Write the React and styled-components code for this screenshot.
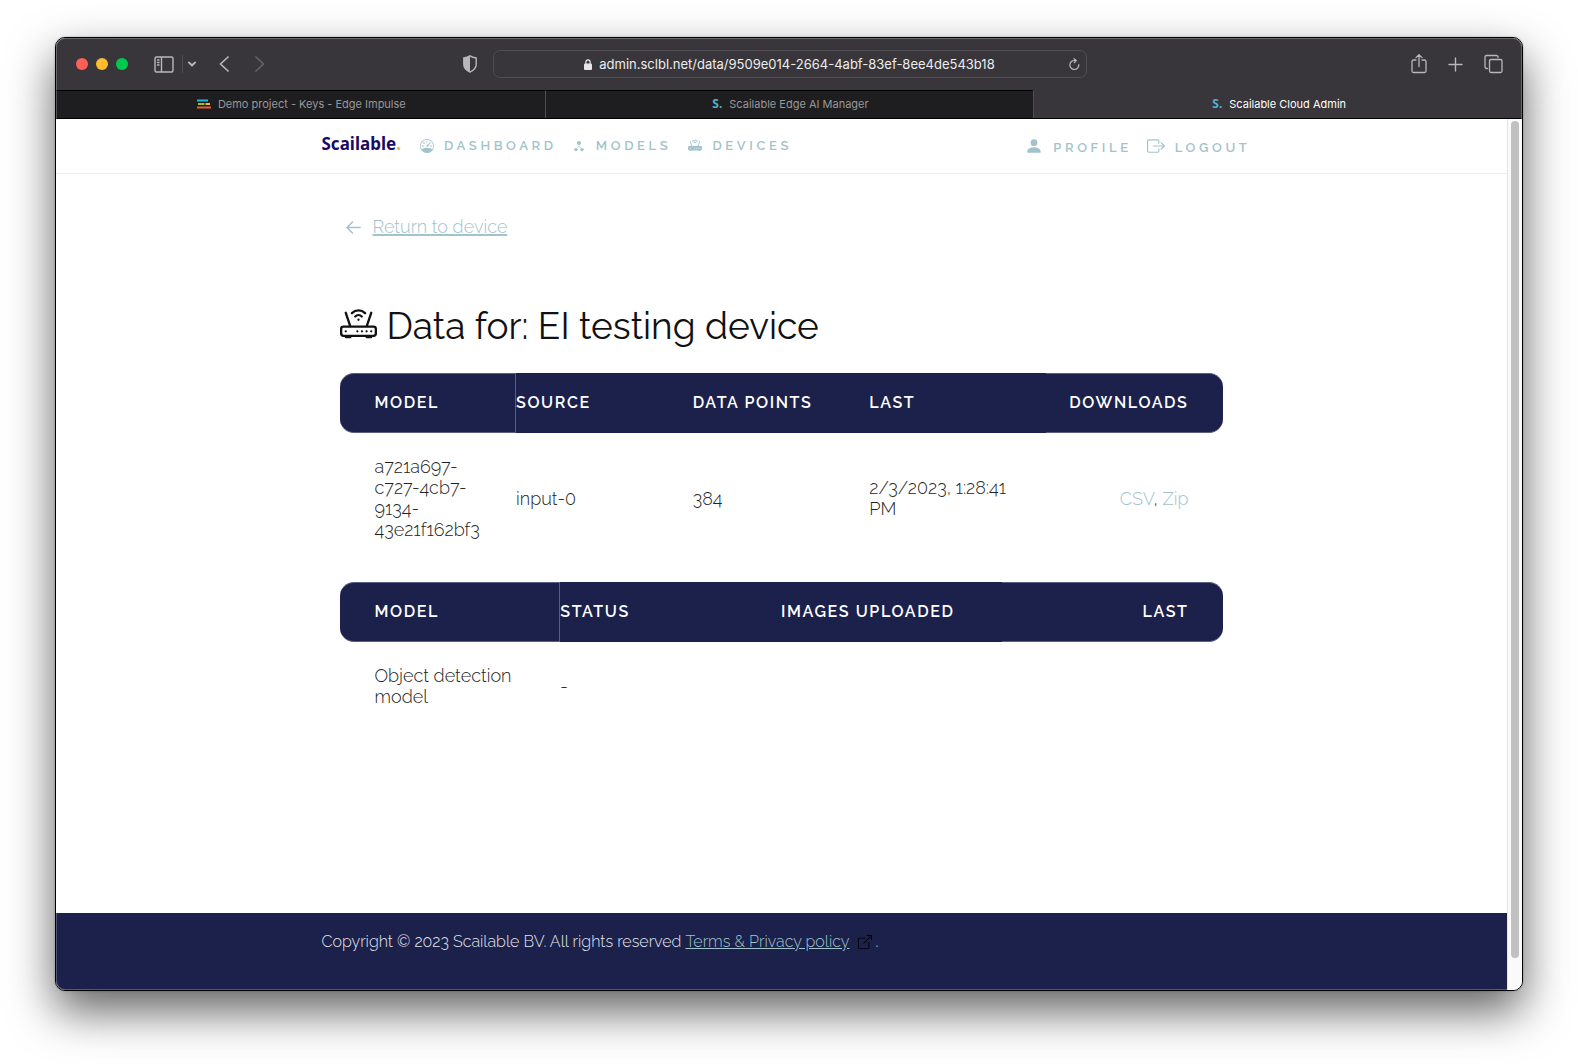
import React from "react";
import styled, { createGlobalStyle, css } from "styled-components";
import {
  BsSpeedometer,
  BsRouter,
  BsRouterFill,
  BsPersonFill,
  BsBoxArrowRight,
  BsBoxArrowUpRight,
} from "react-icons/bs";

const navy = "#1b214b";
const teal = "#a1c3cc";
const chrome = "#38363a";
const uiFont = `Inter, "Liberation Sans", sans-serif`;
const bodyFont = `Raleway, Lato, "Open Sans", sans-serif`;

const GlobalStyle = createGlobalStyle`
  *, *::before, *::after { box-sizing: border-box; }
  body { margin: 0; background: #fff; font-family: ${bodyFont}; color: #222; }
  button { font: inherit; color: inherit; background: none; border: 0; padding: 0; }
  svg { display: block; flex: none; }
`;

const Desktop = styled.div`
  display: flex;
  min-height: 100vh;
  padding: 37px 55px 73px;
  overflow: hidden;
`;

const Window = styled.div`
  position: relative;
  flex: 1;
  min-width: 0;
  display: flex;
  flex-direction: column;
  border: 1px solid #000;
  border-radius: 10px;
  overflow: hidden;
  background: #fff;
  box-shadow: 0 0 2px rgba(0, 0, 0, 0.3), 0 20px 46px rgba(0, 0, 0, 0.62);

  &::after {
    content: "";
    position: absolute;
    inset: 0;
    border-radius: 9px;
    box-shadow: inset 0 0 0 1px rgba(255, 255, 255, 0.25);
    pointer-events: none;
  }
`;

const Toolbar = styled.div`
  display: grid;
  grid-template-columns: 1fr minmax(0, 594px) 1fr;
  align-items: center;
  column-gap: 16px;
  height: 52px;
  padding: 0 19px 0 20px;
  background: ${chrome};
  color: #b9b7bb;
`;

const ToolGroup = styled.div`
  display: flex;
  align-items: center;
  gap: ${(p) => p.$gap || 0}px;
  ${(p) => p.$end && css`justify-content: flex-end;`}
`;

const Light = styled.button`
  width: 12px;
  height: 12px;
  border-radius: 50%;
  background: ${(p) => p.$color};
`;

const ToolButton = styled.button`
  display: flex;
  opacity: ${(p) => (p.disabled ? 0.35 : 1)};
  margin-left: ${(p) => p.$before || 0}px;
`;

const ToolDivider = styled.span`
  width: 1px;
  height: 18px;
  margin-left: 8px;
  background: #4d4b50;
`;

const ShieldButton = styled(ToolButton)`
  margin-left: auto;
`;

const AddressBar = styled.form`
  display: grid;
  grid-template-columns: 20px 1fr 20px;
  align-items: center;
  height: 28px;
  padding: 0 4px;
  border: 1px solid #504e53;
  border-radius: 7px;
`;

const AddressLabel = styled.label`
  grid-column: 2;
  display: flex;
  justify-content: center;
  align-items: center;
  gap: 7px;
  min-width: 0;
  color: #e6e5e7;
`;

const AddressInput = styled.input`
  field-sizing: content;
  min-width: 0;
  padding: 0;
  border: 0;
  outline: 0;
  background: transparent;
  color: #ececee;
  font: 400 13px/20px ${uiFont};
`;

const TabBar = styled.div`
  display: grid;
  grid-template-columns: repeat(3, 1fr);
  height: 29px;
  border-bottom: 1px solid #000;
  background: ${chrome};
`;

const Tab = styled.button`
  display: flex;
  justify-content: center;
  align-items: center;
  gap: 7px;
  min-width: 0;
  padding: 0 0 1px 2px;
  font: 400 11px/16px ${uiFont};
  color: ${(p) => (p.$active ? "#fff" : "#98979a")};
  background: ${(p) => (p.$active ? chrome : "#1e1e20")};
  border-top: 1px solid ${(p) => (p.$active ? chrome : "#000")};
  & + & { border-left: 1px solid #504e53; }
`;

const Favicon = styled.span`
  font: 700 12px/16px "Noto Sans", sans-serif;
  color: #4fb3cf;
`;

const Viewport = styled.div`
  flex: 1;
  display: flex;
`;

const Page = styled.div`
  flex: 1;
  min-width: 0;
  display: flex;
  flex-direction: column;
`;

const ScrollTrack = styled.div`
  width: 15px;
  padding: 2px 2px 2px 3px;
  border-left: 1px solid #e4e4e4;
  background: #fafafa;
`;

const ScrollThumb = styled.div`
  width: 8px;
  height: 96.5%;
  border-radius: 4px;
  background: #c1c1c1;
`;

const Container = styled.div`
  width: 100%;
  max-width: 960px;
  margin: 0 auto;
  padding: 0 11px 0 20px;
`;

const NavBar = styled.header`
  border-bottom: 1px solid #ececec;
`;

const NavRow = styled(Container)`
  display: flex;
  align-items: center;
  height: 54px;
`;

const Logo = styled.a`
  margin: 0 19px 4px 0;
  font: 700 17px/24px "Noto Sans", sans-serif;
  color: #1b0a63;
  text-decoration: none;
  span { color: #fbb03b; }
`;

const NavGroup = styled.nav`
  display: flex;
  gap: 17px;
  ${(p) => p.$end && css`
    gap: 15px;
    margin-left: auto;
    padding-top: 4px;
    svg { margin-bottom: 4px; }
  `}
`;

const NavLink = styled.a`
  display: flex;
  align-items: center;
  gap: 10px;
  font-size: 13px;
  line-height: 20px;
  font-weight: 600;
  letter-spacing: 0.28em;
  text-transform: uppercase;
  text-decoration: none;
  color: ${teal};
`;

const Main = styled.main`
  width: 100%;
  max-width: 922px;
  margin: 0 auto;
  padding: 42px 20px 40px 19px;
  flex: 1;
`;

const BackLink = styled.a`
  display: flex;
  align-items: center;
  gap: 12px;
  padding-left: 6px;
  color: ${teal};
  font-size: 18px;
  line-height: 22px;
  font-weight: 300;
  text-decoration: none;
  span {
    text-decoration: underline;
    text-decoration-thickness: 2px;
    text-underline-offset: 1px;
  }
`;

const Title = styled.h1`
  display: flex;
  align-items: center;
  gap: 10px;
  margin: 66px 0 25px;
  font-size: 37px;
  line-height: 44px;
  font-weight: 400;
  color: #111;
  svg { margin-bottom: 2px; }
`;

const DataTable = styled.table`
  width: 100%;
  margin-bottom: 17px;
  table-layout: fixed;
  border-collapse: separate;
  border-spacing: 0;
  text-align: left;

  th {
    height: 60px;
    padding: 0;
    background: ${navy};
    color: #fff;
    font-size: 16px;
    line-height: 20px;
    font-weight: 600;
    letter-spacing: 0.1em;
    text-transform: uppercase;
    white-space: nowrap;
  }
  th:first-child, th:last-child {
    border: 0 solid #5b5e80;
    border-width: 1px 0;
  }
  th:first-child { border-right-width: 1px; border-radius: 14px 0 0 14px; }
  th:last-child { border-radius: 0 14px 14px 0; }
  td {
    padding: 23px 16px 25px 0;
    vertical-align: middle;
    font-size: 18px;
    line-height: 21px;
    font-weight: 300;
    font-variant-numeric: oldstyle-nums;
  }
  th:first-child, td:first-child { padding-left: 35px; padding-right: 30px; }
  th:last-child, td:last-child { padding-right: 34px; text-align: right; }
`;

const DownloadLink = styled.a`
  color: ${teal};
  text-decoration: none;
`;

const Footer = styled.footer`
  background: ${navy};
  color: #e4e5ee;
  font-size: 16px;
  line-height: 20px;
  font-weight: 300;
  font-variant-numeric: oldstyle-nums;
`;

const FooterRow = styled(Container)`
  display: flex;
  align-items: center;
  height: 77px;
  padding-bottom: 19px;
`;

const FooterLink = styled.a`
  margin: 0 8px 0 4px;
  color: ${teal};
  text-decoration: underline;
`;

const FooterIcon = styled.span`
  margin-right: 4px;
  color: #000;
`;

const Line = ({ w, h, d, sw = 1.4 }) => (
  <svg width={w} height={h} viewBox={`0 0 ${w} ${h}`} fill="none" stroke="currentColor" strokeWidth={sw} strokeLinecap="round" strokeLinejoin="round" aria-hidden="true">
    <path d={d} />
  </svg>
);

const ModelsIcon = () => (
  <svg width="12" height="12" viewBox="0 0 12 12" fill="currentColor" aria-hidden="true">
    <circle cx="5" cy="3" r="2" />
    <circle cx="2" cy="9.6" r="1.7" />
    <circle cx="8" cy="9.6" r="1.7" />
    <path d="M5 4v2.600M2 9L5 6.400L8 9" fill="none" stroke="currentColor" strokeWidth="0.600" />
  </svg>
);

const ShieldIcon = () => (
  <svg width="14" height="18" viewBox="0 0 14 18" aria-hidden="true">
    <path d="M7 .9C9 2.3 11 2.8 13.2 3v6.3c0 3.8-2.6 6.2-6.2 7.8C3.4 15.500 .8 13.100 .8 9.300V3C3 2.800 5 2.300 7 .9z" fill="none" stroke="currentColor" strokeWidth="1.400" />
    <path d="M7 .9C5 2.300 3 2.800 .8 3v6.300c0 3.800 2.600 6.200 6.200 7.800z" fill="currentColor" />
  </svg>
);

const LockIcon = () => (
  <svg width="8" height="11" viewBox="0 0 8 11" aria-hidden="true">
    <rect x="0" y="4.500" width="8" height="6.500" rx="1" fill="currentColor" />
    <path d="M1.900 5V3a2.100 2.100 0 0 1 4.200 0v2" fill="none" stroke="currentColor" strokeWidth="1.200" />
  </svg>
);

const EdgeIcon = () => (
  <svg width="14" height="10" viewBox="0 0 14 10" strokeWidth="2" aria-hidden="true">
    <path d="M0 1.500h11" stroke="#29b5d8" />
    <path d="M1 5h6.500" stroke="#8fc31f" />
    <path d="M8.500 5H13" stroke="#f5b82e" />
    <path d="M0 8.500h14" stroke="#ef5a33" />
  </svg>
);

const Browser = () => (
  <>
    <Toolbar>
      <ToolGroup>
        <ToolGroup $gap={8}>
          <Light $color="#ff5f57" aria-label="Close" />
          <Light $color="#febc2e" aria-label="Minimize" />
          <Light $color="#00ca4e" aria-label="Zoom" />
        </ToolGroup>
        <ToolButton $before={26} aria-label="Sidebar">
          <Line w={20} h={17} d="M2.500 1h15a1.500 1.500 0 0 1 1.500 1.500v12a1.500 1.500 0 0 1-1.500 1.500h-15A1.500 1.500 0 0 1 1 14.500v-12A1.500 1.500 0 0 1 2.500 1zM7.500 1v15M3.500 4h1.500M3.500 6.500h1.500M3.500 9h1.500" />
        </ToolButton>
        <ToolDivider />
        <ToolButton $before={5} aria-label="Tab groups">
          <Line w={8} h={6} sw={1.8} d="M1 1.500l3 3l3-3" />
        </ToolButton>
        <ToolButton $before={23} aria-label="Back">
          <Line w={10} h={16} sw={1.7} d="M9 1L1.500 8L9 15" />
        </ToolButton>
        <ToolButton $before={26} disabled aria-label="Forward">
          <Line w={10} h={16} sw={1.7} d="M1 1L8.500 8L1 15" />
        </ToolButton>
        <ShieldButton aria-label="Privacy report">
          <ShieldIcon />
        </ShieldButton>
      </ToolGroup>
      <AddressBar onSubmit={(e) => e.preventDefault()}>
        <AddressLabel>
          <LockIcon />
          <AddressInput aria-label="Address" defaultValue="admin.sclbl.net/data/9509e014-2664-4abf-83ef-8ee4de543b18" />
        </AddressLabel>
        <ToolButton $before={7} type="button" aria-label="Reload">
          <Line w={11} h={12} sw={1.2} d="M9.800 6.500A4.500 4.500 0 1 1 5.500 2.500h1.500M5 .7l2.300 1.800L5.300 4.700" />
        </ToolButton>
      </AddressBar>
      <ToolGroup $end $gap={21}>
        <ToolButton aria-label="Share">
          <Line w={16} h={21} sw={1.300} d="M5 6H2.500A1.500 1.500 0 0 0 1 7.500v9.500a1.500 1.500 0 0 0 1.500 1.500h11a1.500 1.500 0 0 0 1.500-1.500V7.500A1.500 1.500 0 0 0 13.500 6H11M8 12.500V.8M5 3.600l3-3l3 3" />
        </ToolButton>
        <ToolButton aria-label="New tab">
          <Line w={15} h={15} sw={1.400} d="M7.500 1v13M1 7.500h13" />
        </ToolButton>
        <ToolButton aria-label="Tab overview">
          <Line w={19} h={20} sw={1.300} d="M7 5.500h9.500a1.500 1.500 0 0 1 1.500 1.500v10a1.500 1.500 0 0 1-1.500 1.500H7a1.500 1.500 0 0 1-1.500-1.500V7A1.500 1.500 0 0 1 7 5.500zM3.500 14.500H2.500A1.500 1.500 0 0 1 1 13V3a1.500 1.500 0 0 1 1.500-1.500h10A1.500 1.500 0 0 1 14 3v.5" />
        </ToolButton>
      </ToolGroup>
    </Toolbar>
    <TabBar>
      <Tab><EdgeIcon />Demo project - Keys - Edge Impulse</Tab>
      <Tab><Favicon>S.</Favicon>Scailable Edge AI Manager</Tab>
      <Tab $active><Favicon>S.</Favicon>Scailable Cloud Admin</Tab>
    </TabBar>
  </>
);

export default function App() {
  return (
    <>
      <GlobalStyle />
      <Desktop>
        <Window>
          <Browser />
          <Viewport>
            <Page>
              <NavBar>
                <NavRow>
                  <Logo href="#">Scailable<span>.</span></Logo>
                  <NavGroup>
                    <NavLink href="#"><BsSpeedometer size={14} />Dashboard</NavLink>
                    <NavLink href="#"><ModelsIcon />Models</NavLink>
                    <NavLink href="#"><BsRouterFill size={14} />Devices</NavLink>
                  </NavGroup>
                  <NavGroup $end>
                    <NavLink href="#"><BsPersonFill size={18} />Profile</NavLink>
                    <NavLink href="#"><BsBoxArrowRight size={18} />Logout</NavLink>
                  </NavGroup>
                </NavRow>
              </NavBar>
              <Main>
                <BackLink href="#">
                  <Line w={15} h={13} sw={1.600} d="M14 6.500H1M6.500 1L1 6.500L6.500 12" />
                  <span>Return to device</span>
                </BackLink>
                <Title><BsRouter size={37} />Data for: EI testing device</Title>
                <DataTable>
                  <thead>
                    <tr>
                      <th scope="col">Model</th>
                      <th scope="col">Source</th>
                      <th scope="col">Data points</th>
                      <th scope="col">Last</th>
                      <th scope="col">Downloads</th>
                    </tr>
                  </thead>
                  <tbody>
                    <tr>
                      <td>a721a697-c727-4cb7-9134-43e21f162bf3</td>
                      <td>input-0</td>
                      <td>384</td>
                      <td>2/3/2023, 1:28:41 PM</td>
                      <td><DownloadLink href="#">CSV</DownloadLink>, <DownloadLink href="#">Zip</DownloadLink></td>
                    </tr>
                  </tbody>
                </DataTable>
                <DataTable>
                  <thead>
                    <tr>
                      <th scope="col">Model</th>
                      <th scope="col">Status</th>
                      <th scope="col">Images uploaded</th>
                      <th scope="col">Last</th>
                    </tr>
                  </thead>
                  <tbody>
                    <tr>
                      <td>Object detection model</td>
                      <td>-</td>
                      <td></td>
                      <td></td>
                    </tr>
                  </tbody>
                </DataTable>
              </Main>
              <Footer>
                <FooterRow>
                  Copyright © 2023 Scailable BV. All rights reserved
                  <FooterLink href="#">Terms &amp; Privacy policy</FooterLink>
                  <FooterIcon><BsBoxArrowUpRight size={14} /></FooterIcon>.
                </FooterRow>
              </Footer>
            </Page>
            <ScrollTrack><ScrollThumb /></ScrollTrack>
          </Viewport>
        </Window>
      </Desktop>
    </>
  );
}
